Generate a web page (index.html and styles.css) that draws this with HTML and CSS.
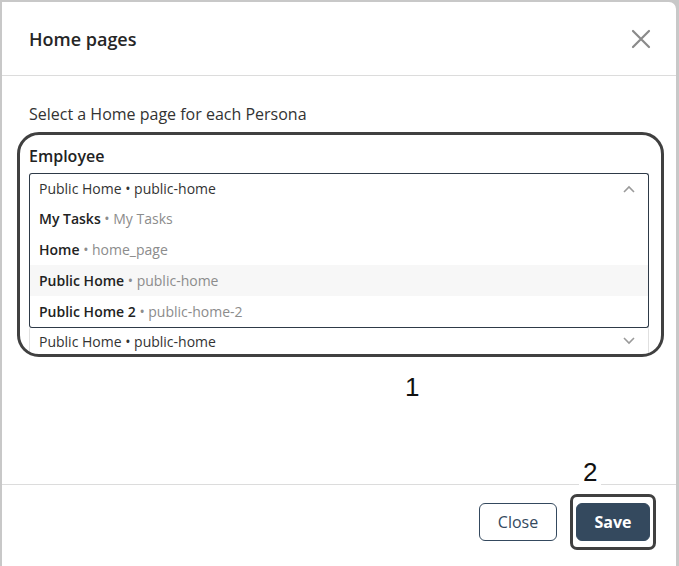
FILE: index.html
```html
<!DOCTYPE html>
<html lang="en">
<head>
<meta charset="utf-8">
<title>Home pages</title>
<link rel="stylesheet" href="styles.css">
</head>
<body>
<div class="dialog">
  <header class="dlg-header">
    <h1 class="dlg-title">Home pages</h1>
    <button class="icon-close" aria-label="Close">
      <svg width="20" height="20" viewBox="0 0 20 20"><path d="M2 2 L18 18 M18 2 L2 18" stroke="#8a8a8a" stroke-width="2.2" stroke-linecap="round" fill="none"/></svg>
    </button>
  </header>
  <main class="dlg-body">
    <p class="intro">Select a Home page for each Persona</p>
    <div class="field">
      <label class="field-label">Employee</label>
      <div class="select-wrap">
        <div class="select open">
          <span class="sel-text">Public Home • public-home</span>
          <svg class="chev" width="12" height="8" viewBox="0 0 12 8"><path d="M1 7 L6 2 L11 7" stroke="#9a9a9a" stroke-width="1.6" fill="none"/></svg>
        </div>
        <ul class="menu">
          <li class="opt"><b>My Tasks</b><span class="sub"> • My Tasks</span></li>
          <li class="opt"><b>Home</b><span class="sub"> • home_page</span></li>
          <li class="opt hl"><b>Public Home</b><span class="sub"> • public-home</span></li>
          <li class="opt"><b>Public Home 2</b><span class="sub"> • public-home-2</span></li>
        </ul>
      </div>
      <div class="select second">
        <span class="sel-text">Public Home • public-home</span>
        <svg class="chev" width="12" height="8" viewBox="0 0 12 8"><path d="M1 1 L6 6 L11 1" stroke="#9a9a9a" stroke-width="1.6" fill="none"/></svg>
      </div>
    </div>
    <div class="annot-box box1"></div>
    <span class="annot-num num1">1</span>
  </main>
  <footer class="dlg-footer">
    <button class="btn btn-outline">Close</button>
    <button class="btn btn-primary">Save</button>
    <div class="annot-box box2"></div>
    <span class="annot-num num2">2</span>
  </footer>
</div>
</body>
</html>
```
FILE: styles.css
```css
* { box-sizing: border-box; }
html, body { margin: 0; padding: 0; }
body {
  background: #c8c8c8;
  font-family: "Open Sans", "Noto Sans", sans-serif;
  color: #222;
  overflow: hidden;
}
.dialog {
  position: relative;
  margin: 2px 3px 0 2px;
  height: 564px;
  background: #fff;
  border-radius: 0 7px 0 0;
  display: flex;
  flex-direction: column;
}
.dlg-header {
  height: 74px;
  padding: 0 25px 0 27px;
  display: flex;
  align-items: center;
  justify-content: space-between;
  border-bottom: 1px solid #dcdcdc;
}
.dlg-title {
  margin: 0;
  font-size: 18px;
  font-weight: 600;
  color: #262626;
}
.icon-close {
  border: 0;
  background: none;
  padding: 0;
  width: 20px;
  height: 20px;
  display: flex;
}
.dlg-body {
  position: relative;
  flex: 1;
  padding: 26px 27px 0 27px;
}
.intro {
  margin: 0;
  font-size: 16px;
  line-height: 24px;
  color: #333;
}
.field { margin-top: 18px; }
.field-label {
  display: block;
  font-size: 16px;
  font-weight: 600;
  line-height: 24px;
  color: #222;
}
.select-wrap { position: relative; margin-top: 5px; }
.select {
  height: 30px;
  border: 1px solid #2e3a48;
  border-radius: 3px;
  display: flex;
  align-items: center;
  justify-content: space-between;
  padding: 0 13px 0 9px;
  font-size: 14px;
  color: #333;
  background: #fff;
}
.select.open {
  border-bottom: 0;
  border-radius: 3px 3px 0 0;
}
.menu {
  position: absolute;
  left: 0;
  right: 0;
  top: 30px;
  margin: 0;
  padding: 0;
  list-style: none;
  border: 1px solid #2e3a48;
  border-top: 0;
  border-radius: 0 0 3px 3px;
  background: #fff;
  z-index: 2;
}
.opt {
  height: 31px;
  display: flex;
  align-items: center;
  padding: 0 9px;
  font-size: 14px;
  color: #222;
  white-space: pre;
}
.opt b { font-weight: 600; }
.opt .sub { color: #8c8c8c; }
.opt.hl { background: #f7f7f7; }
.select.second {
  margin-top: 124px;
  border-color: #e0e0e0;
  border-top: 0;
  height: 29px;
}
.annot-box {
  position: absolute;
  border: 3px solid #404040;
  pointer-events: none;
  z-index: 3;
}
.box1 {
  left: 15px;
  top: 56px;
  width: 647px;
  height: 225px;
  border-radius: 22px;
}
.annot-num {
  position: absolute;
  font-family: "Liberation Sans", Arial, sans-serif;
  font-size: 26px;
  line-height: 28px;
  color: #111;
  background: #fff;
  padding: 0 4px;
  z-index: 3;
}
.num1 { left: 399px; top: 297px; }
.dlg-footer {
  position: relative;
  height: 82px;
  border-top: 1px solid #dcdcdc;
  display: flex;
  justify-content: flex-end;
  align-items: flex-start;
  gap: 19px;
  padding: 18px 26px 0 0;
}
.btn {
  height: 38px;
  border-radius: 6px;
  font-family: "Open Sans", "Noto Sans", sans-serif;
  font-size: 16px;
  padding: 0;
}
.btn-outline {
  width: 78px;
  background: #fff;
  border: 1px solid #34495e;
  color: #34495e;
}
.btn-primary {
  width: 74px;
  background: #34495e;
  border: 1px solid #34495e;
  color: #fff;
  font-weight: 700;
}
.box2 {
  left: 568px;
  top: 9px;
  width: 86px;
  height: 56px;
  border-radius: 7px;
}
.num2 { left: 577px; top: -27px; }
```
